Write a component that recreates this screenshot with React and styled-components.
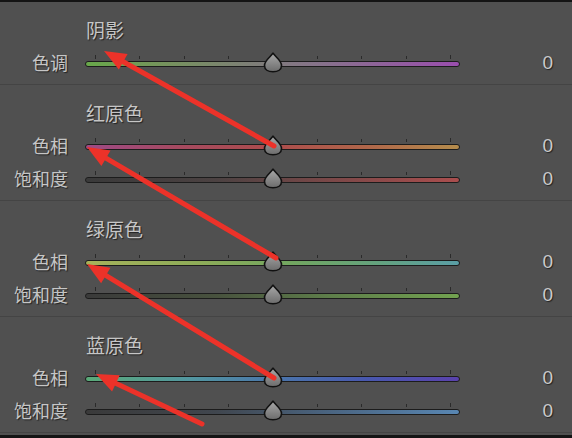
import React from "react";
import styled, { createGlobalStyle } from "styled-components";

const Global = createGlobalStyle`
  html, body { margin: 0; padding: 0; background: #505050; }
  body { font-family: "Noto Sans CJK SC", "Noto Sans", sans-serif; }
`;

const Page = styled.div`
  position: relative;
  width: 572px;
  height: 438px;
  box-sizing: border-box;
  background: #505050;
  border-top: 2px solid #141414;
  border-bottom: 3px solid #141414;
  overflow: hidden;
  display: flex;
  flex-direction: column;
`;

const Section = styled.section`
  display: flex;
  flex-direction: column;
  padding: 15px 0 8px;
  border-bottom: 1px solid #444444;
`;

const Title = styled.div`
  height: 26px;
  line-height: 26px;
  margin-left: 86px;
  font-size: 19px;
  color: #c6c6c6;
  text-shadow: 1px 1px 1px rgba(0, 0, 0, 0.6);
`;

const Row = styled.div`
  display: grid;
  grid-template-columns: 68px 375px 1fr;
  column-gap: 17px;
  align-items: center;
  height: 33px;
`;

const Label = styled.div`
  margin-top: 4px;
  text-align: right;
  font-size: 18px;
  line-height: 20px;
  color: #c6c6c6;
  text-shadow: 1px 1px 1px rgba(0, 0, 0, 0.6);
`;

const Value = styled.div`
  margin-top: 6px;
  text-align: right;
  padding-right: 19px;
  font-family: "Liberation Sans", Arial, sans-serif;
  font-size: 19px;
  line-height: 20px;
  color: #cacaca;
  text-shadow: 1px 1px 1px rgba(0, 0, 0, 0.6);
`;

const Slider = styled.div`
  position: relative;
  display: flex;
  flex-direction: column;
  gap: 2px;
  margin-top: 2px;
`;

const Ticks = styled.div`
  display: flex;
  justify-content: space-between;
  align-items: flex-end;
  height: 4px;
  padding: 0 9px 0 10px;
`;

const Tick = styled.span`
  width: 1px;
  height: ${(p) => (p.$end ? 4 : 3)}px;
  background: #2a2a2a;
`;

const Track = styled.div`
  height: 6px;
  box-sizing: border-box;
  border: 1px solid #1c1c1c;
  border-radius: 3px;
  background: ${(p) => p.$gradient};
`;

const Thumb = styled.svg`
  position: absolute;
  left: 178px;
  top: -3px;
  width: 20px;
  height: 21px;
  overflow: visible;
`;

const Overlay = styled.svg`
  position: absolute;
  left: 0;
  top: -2px;
  width: 572px;
  height: 438px;
  pointer-events: none;
`;

const sections = [
  {
    title: "阴影",
    rows: [
      {
        label: "色调",
        gradient:
          "linear-gradient(90deg,#68a84a 0%,#76925e 22%,#7e7e78 45%,#86738a 62%,#9a4eae 100%)",
      },
    ],
  },
  {
    title: "红原色",
    rows: [
      {
        label: "色相",
        gradient:
          "linear-gradient(90deg,#9e4a86 0%,#a64a60 25%,#ac4c4c 50%,#b0664a 75%,#b48c4c 100%)",
      },
      {
        label: "饱和度",
        gradient:
          "linear-gradient(90deg,#3a3a3a 0%,#4c4242 35%,#7a4848 65%,#aa4e4e 100%)",
      },
    ],
  },
  {
    title: "绿原色",
    rows: [
      {
        label: "色相",
        gradient:
          "linear-gradient(90deg,#a6b25a 0%,#8eac58 30%,#72a660 55%,#64a27e 78%,#5a9ea6 100%)",
      },
      {
        label: "饱和度",
        gradient:
          "linear-gradient(90deg,#3a3a3a 0%,#48523e 35%,#5e7e4a 65%,#72a250 100%)",
      },
    ],
  },
  {
    title: "蓝原色",
    rows: [
      {
        label: "色相",
        gradient:
          "linear-gradient(90deg,#5aaa78 0%,#5296a0 28%,#4a76aa 50%,#4858ae 75%,#5a42ac 100%)",
      },
      {
        label: "饱和度",
        gradient:
          "linear-gradient(90deg,#3a3a3a 0%,#40464e 35%,#4a6480 65%,#5886b2 100%)",
      },
    ],
  },
];

const arrows = [
  { from: [274, 146], to: [104, 51] },
  { from: [276, 258], to: [87, 147] },
  { from: [274, 378], to: [87, 264] },
  { from: [202, 424], to: [96, 374] },
];

function Arrow({ from, to }) {
  const [x1, y1] = from;
  const [x2, y2] = to;
  const dx = x2 - x1;
  const dy = y2 - y1;
  const len = Math.hypot(dx, dy);
  const ux = dx / len;
  const uy = dy / len;
  const headLen = 22;
  const half = 9;
  const bx = x2 - ux * headLen;
  const by = y2 - uy * headLen;
  const px = -uy;
  const py = ux;
  const pts = `${x2},${y2} ${bx + px * half},${by + py * half} ${bx - px * half},${by - py * half}`;
  return (
    <g>
      <line
        x1={x1}
        y1={y1}
        x2={bx + ux * 2}
        y2={by + uy * 2}
        stroke="#ec3229"
        strokeWidth="5"
        strokeLinecap="round"
      />
      <polygon points={pts} fill="#ec3229" />
    </g>
  );
}

function ThumbShape() {
  return (
    <Thumb viewBox="0 0 20 21">
      <defs>
        <linearGradient id="thumbFill" x1="0" y1="0" x2="0" y2="1">
          <stop offset="0%" stopColor="#a8a8a8" />
          <stop offset="100%" stopColor="#6c6c6c" />
        </linearGradient>
      </defs>
      <path
        d="M10 1.2 C12 4.5 18.5 8.5 18.5 13.5 C18.5 17.5 15 19.8 10 19.8 C5 19.8 1.5 17.5 1.5 13.5 C1.5 8.5 8 4.5 10 1.2 Z"
        fill="url(#thumbFill)"
        stroke="#111"
        strokeWidth="1.6"
        strokeLinejoin="round"
      />
    </Thumb>
  );
}

function SliderRow({ label, gradient }) {
  return (
    <Row>
      <Label>{label}</Label>
      <Slider>
        <Ticks>
          {Array.from({ length: 9 }).map((_, i) => (
            <Tick key={i} $end={i === 0 || i === 8} />
          ))}
        </Ticks>
        <Track $gradient={gradient} />
        <ThumbShape />
      </Slider>
      <Value>0</Value>
    </Row>
  );
}

export default function App() {
  return (
    <>
      <Global />
      <Page>
        {sections.map((s) => (
          <Section key={s.title}>
            <Title>{s.title}</Title>
            {s.rows.map((r) => (
              <SliderRow key={r.label} label={r.label} gradient={r.gradient} />
            ))}
          </Section>
        ))}
        <Overlay viewBox="0 0 572 438">
          {arrows.map((a, i) => (
            <Arrow key={i} from={a.from} to={a.to} />
          ))}
        </Overlay>
      </Page>
    </>
  );
}
